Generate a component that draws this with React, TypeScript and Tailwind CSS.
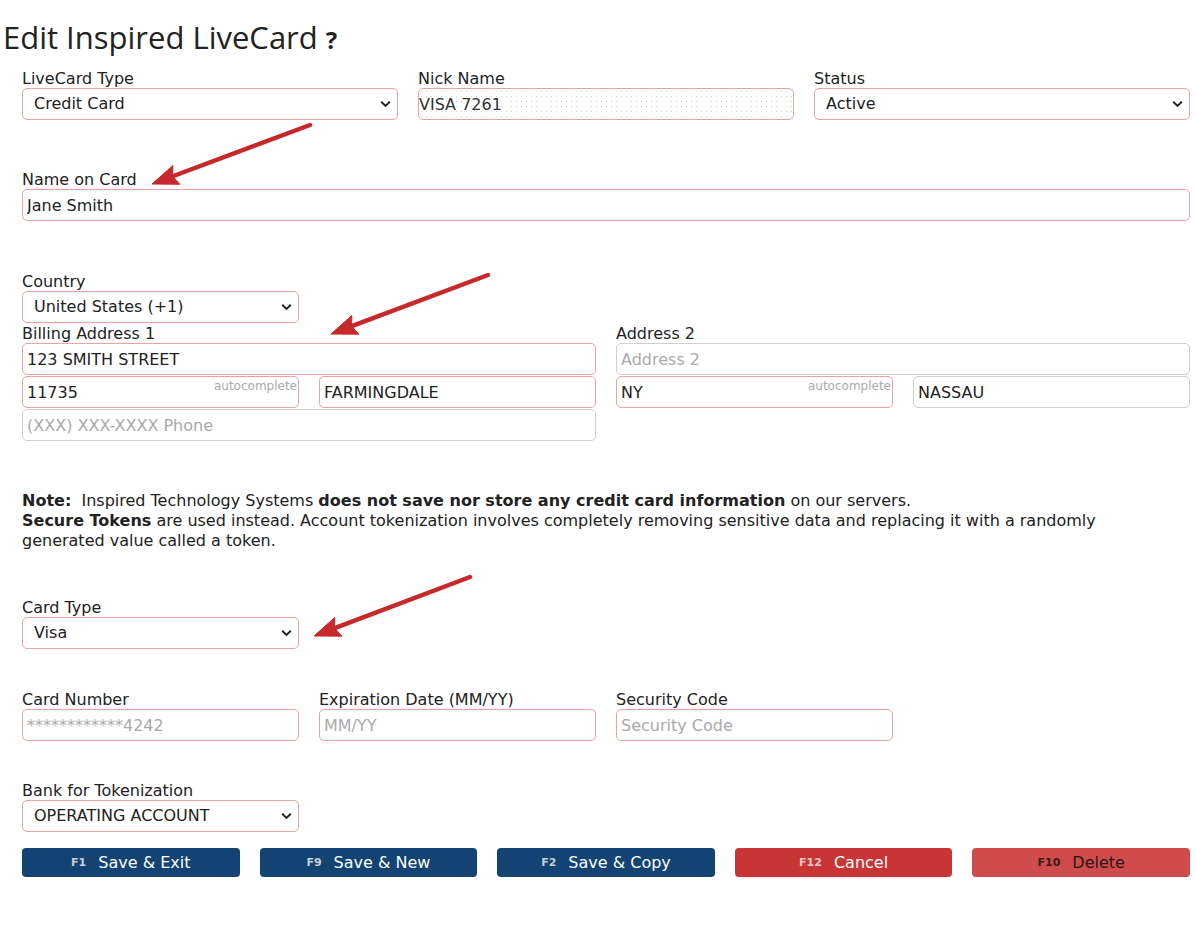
import React from 'react';

const inputBase =
  'h-8 w-full rounded-[5px] border bg-white text-[16px] text-[#222] outline-none placeholder:text-[#aaa]';
const pink = 'border-[#e9a3a3]';
const gray = 'border-[#cfcfcf]';

const Chevron = () => (
  <svg className="pointer-events-none absolute right-[7px] top-1/2 -translate-y-1/2" width="11" height="7" viewBox="0 0 11 7">
    <path d="M1.2 1.2 L5.5 5.4 L9.8 1.2" fill="none" stroke="#222" strokeWidth="2" />
  </svg>
);

const Select = ({ value }: { value: string }) => (
  <div className="relative">
    <select className={`${inputBase} ${pink} appearance-none pl-[11px] pr-8`} defaultValue={value}>
      <option>{value}</option>
    </select>
    <Chevron />
  </div>
);

const Label = ({ children }: { children: React.ReactNode }) => (
  <div className="h-[18px] text-[16px] leading-[18px] text-[#222]">{children}</div>
);

const Field = ({
  value,
  placeholder,
  border = pink,
  auto,
  extra = '',
}: {
  value?: string;
  placeholder?: string;
  border?: string;
  auto?: boolean;
  extra?: string;
}) => (
  <div className="relative">
    <input
      className={`${inputBase} ${border} px-[4px] ${extra}`}
      defaultValue={value}
      placeholder={placeholder}
    />
    {auto && (
      <span className="pointer-events-none absolute right-[2px] top-[4px] text-[12px] leading-none text-[#aaa]">
        autocomplete
      </span>
    )}
  </div>
);

function arrowHead(x1: number, y1: number, x2: number, y2: number) {
  const dx = x2 - x1;
  const dy = y2 - y1;
  const len = Math.hypot(dx, dy);
  const ux = dx / len;
  const uy = dy / len;
  const L = 26;
  const W = 10;
  const bx = x2 - ux * L;
  const by = y2 - uy * L;
  return `${x2},${y2} ${bx - uy * W},${by + ux * W} ${bx + ux * 4},${by + uy * 4} ${bx + uy * W},${by - ux * W}`;
}

// arrows drawn over the form: [tailX, tailY, tipX, tipY]
const arrows = [
  [310, 125, 152, 184],
  [488, 275, 331, 334],
  [470, 577, 314, 636],
];

const Btn = ({ k, label, cls, kcls }: { k: string; label: string; cls: string; kcls: string }) => (
  <button className={`flex h-[29px] items-center justify-center gap-[12px] rounded-[4px] text-[16px] ${cls}`}>
    <span className={`translate-y-[1px] text-[11px] font-bold ${kcls}`}>{k}</span>
    <span>{label}</span>
  </button>
);

export default function App() {
  return (
    <div
      className="relative min-h-[930px] w-[1196px] bg-white text-[#222]"
      style={{ fontFamily: '"DejaVu Sans", Verdana, sans-serif' }}
    >
      <h1
        className="ml-[3px] pt-[17px] text-[31px] leading-[40px] text-[#222]"
        style={{ fontFamily: '"Open Sans", "Noto Sans", sans-serif' }}
      >
        Edit Inspired LiveCard <span className="text-[24px] font-bold">?</span>
      </h1>

      <div className="pl-[22px] pr-[6px] pt-[10px]">
        <div className="grid grid-cols-3 gap-x-5">
          <div>
            <Label>LiveCard Type</Label>
            <Select value="Credit Card" />
          </div>
          <div>
            <Label>Nick Name</Label>
            <input
              className={`${inputBase} ${pink} bg-[#edece3] bg-[radial-gradient(#d4d3c6_0.8px,transparent_0.8px)] bg-[size:5px_5px] px-0 text-[#333]`}
              defaultValue="VISA 7261"
              readOnly
            />
          </div>
          <div>
            <Label>Status</Label>
            <Select value="Active" />
          </div>
        </div>

        <div className="mt-[51px]">
          <Label>Name on Card</Label>
          <Field value="Jane Smith" />
        </div>

        <div className="mt-[52px] grid grid-cols-4 gap-x-5">
          <div>
            <Label>Country</Label>
            <Select value="United States (+1)" />
          </div>
        </div>

        <div className="mt-[2px] grid grid-cols-4 gap-x-5 gap-y-[1px]">
          <div className="col-span-2">
            <Label>Billing Address 1</Label>
            <Field value="123 SMITH STREET" />
          </div>
          <div className="col-span-2">
            <Label>Address 2</Label>
            <Field placeholder="Address 2" border={gray} />
          </div>
          <Field value="11735" auto />
          <Field value="FARMINGDALE" />
          <Field value="NY" auto />
          <Field value="NASSAU" border={gray} />
          <div className="col-span-2">
            <Field placeholder="(XXX) XXX-XXXX Phone" border={gray} />
          </div>
        </div>

        <div className="mt-[50px] text-[16px] leading-5">
          <div>
            <b>Note:</b>&nbsp; Inspired Technology Systems <b>does not save nor store any credit card information</b> on our
            servers.
          </div>
          <div className="pr-[50px]">
            <b>Secure Tokens</b> are used instead. Account tokenization involves completely removing sensitive data and
            replacing it with a randomly generated value called a token.
          </div>
        </div>

        <div className="mt-[48px] grid grid-cols-4 gap-x-5">
          <div>
            <Label>Card Type</Label>
            <Select value="Visa" />
          </div>
        </div>

        <div className="mt-[42px] grid grid-cols-4 gap-x-5">
          <div>
            <Label>Card Number</Label>
            <Field placeholder="************4242" />
          </div>
          <div>
            <Label>Expiration Date (MM/YY)</Label>
            <Field placeholder="MM/YY" />
          </div>
          <div>
            <Label>Security Code</Label>
            <Field placeholder="Security Code" />
          </div>
        </div>

        <div className="mt-[41px] grid grid-cols-4 gap-x-5">
          <div>
            <Label>Bank for Tokenization</Label>
            <Select value="OPERATING ACCOUNT" />
          </div>
        </div>

        <div className="mt-[16px] grid grid-cols-5 gap-x-5">
          <Btn k="F1" label="Save & Exit" cls="bg-[#124372] text-white" kcls="text-[#c9ced6]" />
          <Btn k="F9" label="Save & New" cls="bg-[#124372] text-white" kcls="text-[#c9ced6]" />
          <Btn k="F2" label="Save & Copy" cls="bg-[#124372] text-white" kcls="text-[#c9ced6]" />
          <Btn k="F12" label="Cancel" cls="bg-[#c93535] text-white" kcls="text-[#f1c9c9]" />
          <Btn k="F10" label="Delete" cls="bg-[#d04c4c] text-[#2a1414]" kcls="text-[#3a1a1a]" />
        </div>
      </div>

      <svg className="pointer-events-none absolute left-0 top-0" width="1196" height="930">
        {arrows.map(([x1, y1, x2, y2], i) => {
          const len = Math.hypot(x2 - x1, y2 - y1);
          const ex = x2 - ((x2 - x1) / len) * 20;
          const ey = y2 - ((y2 - y1) / len) * 20;
          return (
            <g key={i} fill="#c6282b" stroke="#c6282b">
              <line x1={x1} y1={y1} x2={ex} y2={ey} strokeWidth="4.5" strokeLinecap="round" />
              <polygon points={arrowHead(x1, y1, x2, y2)} strokeWidth="1" />
            </g>
          );
        })}
      </svg>
    </div>
  );
}
